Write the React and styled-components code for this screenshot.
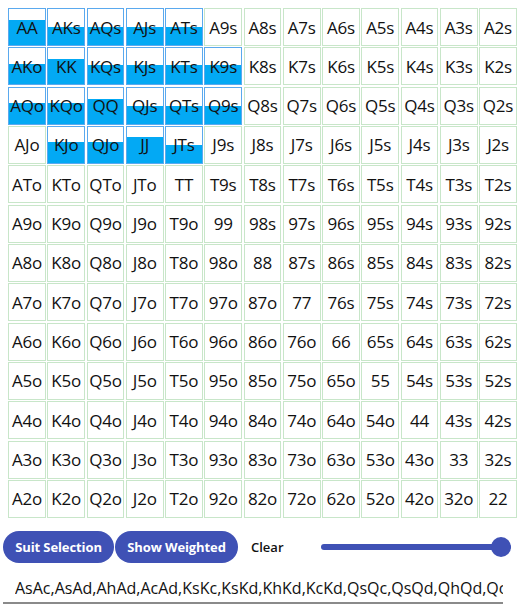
import React from "react";
import styled, { createGlobalStyle } from "styled-components";

const GlobalStyle = createGlobalStyle`
  body {
    margin: 0;
    background: #fff;
    font-family: "Open Sans", "Noto Sans", sans-serif;
    color: #000;
    overflow: hidden;
  }
`;

const RANKS = "AKQJT98765432".split("");

// weight of each hand in the range (share of the cell filled)
const WEIGHTS = {
  AA: 0.69, KK: 0.7, QQ: 0.7, JJ: 0.72,
  AKs: 0.51, AQs: 0.51, AJs: 0.51, ATs: 0.51,
  KQs: 0.52, KJs: 0.52, KTs: 0.52, K9s: 0.52,
  QJs: 0.5, QTs: 0.5, Q9s: 0.5, JTs: 0.5,
  AKo: 0.56, AQo: 0.57, KQo: 0.57, KJo: 0.59, QJo: 0.59,
};

const COMBOS =
  "AsAc,AsAd,AhAd,AcAd,KsKc,KsKd,KhKd,KcKd,QsQc,QsQd,QhQd,QcQd,JsJc,JsJd,JhJd,JcJd,AsKs,AhKh,AcKc,AsQs,AhQh,AcQc";

function handName(row, col) {
  if (row === col) return RANKS[row] + RANKS[col];
  if (col > row) return RANKS[row] + RANKS[col] + "s";
  return RANKS[col] + RANKS[row] + "o";
}

const Page = styled.div`
  padding: 0 3px;
`;

// heading sits above the fold, only the tail of its "y" peeks in
const Title = styled.h2`
  margin: -31px 0 11px 5px;
  font-size: 24px;
  line-height: 28px;
  font-weight: 700;
  white-space: nowrap;
`;

const Grid = styled.div`
  display: grid;
  grid-template-columns: repeat(13, 1fr);
  grid-auto-rows: 38px;
  gap: 1.33px;
  width: 509px;
  margin-left: 5px;
`;

const Cell = styled.div`
  display: flex;
  align-items: center;
  justify-content: center;
  box-sizing: border-box;
  border: 1px solid ${(p) => (p.$weight ? "#5aa9ee" : "#c8e6c9")};
  background: ${(p) =>
    p.$weight
      ? `linear-gradient(to top, #03a9f4 ${p.$weight * 100}%, #fff ${p.$weight * 100}%)`
      : "#fff"};
  font-size: 17px;
  letter-spacing: -0.2px;
  white-space: nowrap;
  color: #111;
  cursor: pointer;
  user-select: none;
`;

const Controls = styled.div`
  display: flex;
  align-items: center;
  margin-top: 13px;
  height: 32px;
`;

const PillButton = styled.button`
  height: 32px;
  width: ${(p) => p.$width}px;
  margin-right: 1px;
  border: none;
  border-radius: 16px;
  background: #3f51b5;
  color: #fff;
  font-family: "Open Sans", sans-serif;
  font-size: 13px;
  font-weight: 700;
  letter-spacing: -0.1px;
  padding: 0;
  cursor: pointer;
`;

const TextButton = styled.button`
  border: none;
  background: transparent;
  padding: 0 13px 0 12px;
  font-family: "Open Sans", sans-serif;
  font-size: 13px;
  font-weight: 600;
  color: #111;
  cursor: pointer;
`;

const Slider = styled.div`
  position: relative;
  display: flex;
  align-items: center;
  width: 190px;
  height: 20px;
  margin-left: 24px;
`;

const Track = styled.div`
  width: 100%;
  height: 6px;
  border-radius: 3px;
  background: #3f51b5;
`;

const Thumb = styled.div`
  position: absolute;
  right: 0;
  top: 0;
  width: 20px;
  height: 20px;
  border-radius: 50%;
  background: #3f51b5;
`;

const RangeInput = styled.input`
  display: block;
  box-sizing: border-box;
  width: 500px;
  height: 37px;
  margin-top: 4px;
  padding: 10px 0 3px 12px;
  border: none;
  border-bottom: 2px solid #8a8a8a;
  outline: none;
  background: transparent;
  font-family: "Open Sans", sans-serif;
  font-size: 16px;
  color: #111;
`;

export default function App() {
  const rows = RANKS.map((_, r) =>
    RANKS.map((__, c) => {
      const name = handName(r, c);
      return <Cell key={name} $weight={WEIGHTS[name]}>{name}</Cell>;
    })
  );

  return (
    <Page>
      <GlobalStyle />
      <Title>Hand Chart Summary</Title>

      {/* 13x13 hand grid */}
      <Grid>{rows}</Grid>

      <Controls>
        <PillButton $width={111}>Suit Selection</PillButton>
        <PillButton $width={123}>Show Weighted</PillButton>
        <TextButton>Clear</TextButton>
        <Slider>
          <Track />
          <Thumb />
        </Slider>
      </Controls>

      <RangeInput value={COMBOS} readOnly />
    </Page>
  );
}
